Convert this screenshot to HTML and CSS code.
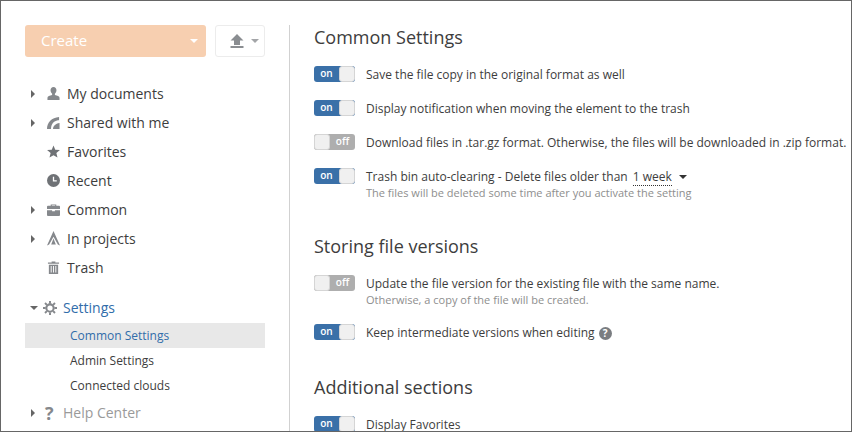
FILE: index.html
```html
<!DOCTYPE html>
<html lang="en">
<head>
  <meta charset="UTF-8" />
  <meta name="viewport" content="width=device-width, initial-scale=1.0"/>
  <title>Common Settings</title>
  <link rel="stylesheet" href="styles.css">
</head>
<body>
  <div class="window">
    <aside class="sidebar">
      <div class="actions">
        <button class="create">Create<span class="caret caret-white"></span></button>
        <button class="upload">
          <svg width="14" height="14" viewBox="0 0 14 14"><path d="M7 0l6.500 6.500H10V11H4V6.500H.5zM.5 12h13v2H.5z" fill="#8a8d91"/></svg>
          <span class="caret caret-grey"></span>
        </button>
      </div>

      <ul class="tree">
        <li class="tree-item"><span class="arrow"></span>
          <svg class="icon" width="13" height="13" viewBox="0 0 14 14"><path d="M7 0c2 0 3.200 1.500 3.200 3.500 0 1.600-.8 3-1.700 3.700v1.300c2.500.6 5 1.500 5 3V14H.5v-2.500c0-1.500 2.500-2.400 5-3V7.200C4.600 6.500 3.800 5.100 3.800 3.500 3.800 1.500 5 0 7 0z" fill="#85888c"/></svg>
          My documents</li>
        <li class="tree-item"><span class="arrow"></span>
          <svg class="icon" width="13" height="13" viewBox="0 0 14 14"><path d="M0 14C0 7 5 1.500 13 1v3.500c-.8 0-1.500.1-2.200.3C7 5.700 4.500 9 4.300 14zM6.500 14c0-3 2.500-6 7-6.500V14z" fill="#85888c"/></svg>
          Shared with me</li>
        <li class="tree-item"><span class="arrow arrow-none"></span>
          <svg class="icon" width="13" height="13" viewBox="0 0 14 14"><path d="M7 .5l1.900 4.600 5 .4-3.800 3.200 1.200 4.800L7 11l-4.300 2.500 1.200-4.800L.1 5.500l5-.4z" fill="#6f7276"/></svg>
          Favorites</li>
        <li class="tree-item"><span class="arrow arrow-none"></span>
          <svg class="icon" width="13" height="13" viewBox="0 0 14 14"><circle cx="7" cy="7" r="7" fill="#6f7276"/><path d="M7 3v4.500h3.500" fill="none" stroke="#fff" stroke-width="1.400"/></svg>
          Recent</li>
        <li class="tree-item"><span class="arrow"></span>
          <svg class="icon" width="13" height="13" viewBox="0 0 14 14"><path d="M4 3V1.500h6V3h3c.6 0 1 .4 1 1v2.500H0V4c0-.6.400-1 1-1zm1.200 0h3.600v-.5H5.200zM0 7.700h5.500v1.200h3V7.700H14V13c0 .6-.4 1-1 1H1c-.6 0-1-.4-1-1z" fill="#85888c"/></svg>
          Common</li>
        <li class="tree-item"><span class="arrow"></span>
          <svg class="icon" width="13" height="15" viewBox="0 0 14 16"><path d="M7 0l1.200 2.600L14 15.500l-2.300-1L7 6l-4.700 8.500-2.300 1L5.800 2.600zM7 8l2.500 6.500h-5z" fill="#85888c"/></svg>
          In projects</li>
        <li class="tree-item"><span class="arrow arrow-none"></span>
          <svg class="icon" width="13" height="13" viewBox="0 0 14 14"><path d="M5 .5h4v1h4v1.500H1V1.500h4zM2 4h10v10H2zM4 5.500v7h1v-7zm2.500 0v7h1v-7zm2.500 0v7h1v-7z" fill="#85888c" fill-rule="evenodd"/></svg>
          Trash</li>
      </ul>

      <div class="settings-head"><span class="arrow-down"></span>
        <svg class="gear" width="14" height="14" viewBox="0 0 16 16"><circle cx="8" cy="8" r="4.200" fill="none" stroke="#85888c" stroke-width="2.400"/><path d="M8 0v3M8 13v3M0 8h3M13 8h3M2.300 2.300l2.100 2.100M11.600 11.600l2.100 2.100M2.300 13.700l2.100-2.100M11.600 4.400l2.100-2.100" stroke="#85888c" stroke-width="2.200"/></svg>
        Settings</div>
      <ul class="subtree">
        <li class="sub-item selected">Common Settings</li>
        <li class="sub-item">Admin Settings</li>
        <li class="sub-item">Connected clouds</li>
      </ul>
      <div class="help-head"><span class="arrow"></span><span class="help-mark">?</span>Help Center</div>
    </aside>

    <main class="content">
      <h2 class="first">Common Settings</h2>
      <div class="setting">
        <span class="toggle on"><span class="label">on</span><span class="knob"></span></span>
        <div class="text">Save the file copy in the original format as well</div>
      </div>
      <div class="setting">
        <span class="toggle on"><span class="label">on</span><span class="knob"></span></span>
        <div class="text">Display notification when moving the element to the trash</div>
      </div>
      <div class="setting">
        <span class="toggle off"><span class="knob"></span><span class="label">off</span></span>
        <div class="text">Download files in .tar.gz format. Otherwise, the files will be downloaded in .zip format.</div>
      </div>
      <div class="setting">
        <span class="toggle on"><span class="label">on</span><span class="knob"></span></span>
        <div class="text">Trash bin auto-clearing - Delete files older than <span class="combo">1 week</span><span class="caret caret-dark"></span>
          <div class="hint">The files will be deleted some time after you activate the setting</div>
        </div>
      </div>

      <h2>Storing file versions</h2>
      <div class="setting">
        <span class="toggle off"><span class="knob"></span><span class="label">off</span></span>
        <div class="text">Update the file version for the existing file with the same name.
          <div class="hint">Otherwise, a copy of the file will be created.</div>
        </div>
      </div>
      <div class="setting">
        <span class="toggle on"><span class="label">on</span><span class="knob"></span></span>
        <div class="text">Keep intermediate versions when editing <span class="help-icon">?</span></div>
      </div>

      <h2>Additional sections</h2>
      <div class="setting">
        <span class="toggle on"><span class="label">on</span><span class="knob"></span></span>
        <div class="text">Display Favorites</div>
      </div>
    </main>
  </div>
</body>
</html>
```

FILE: styles.css
```css
* {
  box-sizing: border-box;
}
html, body {
  margin: 0;
  height: 432px;
  overflow: hidden;
}
body {
  font-family: "Open Sans", sans-serif;
  background-color: #fff;
  color: #3d3d3d;
}
.window {
  display: flex;
  height: 432px;
  border: 1px solid #666;
  overflow: hidden;
}
.sidebar {
  flex: none;
  width: 289px;
  height: 430px;
  margin-top: 24px;
  padding: 0 24px;
  border-right: 1px solid #d1d1d1;
}
.actions {
  display: flex;
  gap: 9px;
  width: 240px;
}
button {
  font-family: inherit;
  border-radius: 3px;
  padding: 0;
}
.create {
  position: relative;
  width: 181px;
  height: 32px;
  border: none;
  background-color: #f7cfb0;
  color: #fff;
  font-size: 15px;
  text-align: left;
  padding: 0 0 2px 16px;
}
.create .caret {
  position: absolute;
  right: 8px;
  top: 14px;
}
.upload {
  display: flex;
  align-items: center;
  justify-content: center;
  gap: 7px;
  width: 50px;
  height: 32px;
  padding-left: 8px;
  border: 1px solid #ececec;
  background-color: #fff;
}
.caret {
  display: inline-block;
  width: 0;
  height: 0;
  border-left: 4px solid transparent;
  border-right: 4px solid transparent;
  border-top: 4px solid #fff;
}
.caret-grey {
  border-top-color: #a3a5a8;
}
.caret-dark {
  border-top-color: #333;
  margin-left: 7px;
  vertical-align: 2px;
}
.tree, .subtree {
  list-style: none;
  margin: 0;
  padding: 0;
}
.tree {
  margin-top: 22px;
}
.tree-item {
  display: flex;
  align-items: center;
  height: 29px;
  font-size: 14px;
  padding-left: 6px;
}
.arrow {
  flex: none;
  width: 0;
  height: 0;
  border-top: 4px solid transparent;
  border-bottom: 4px solid transparent;
  border-left: 4px solid #666;
  margin-right: 12px;
}
.arrow-none {
  border-left-color: transparent;
}
.icon {
  flex: none;
  margin-right: 7px;
}
.settings-head {
  display: flex;
  align-items: center;
  margin-top: 11px;
  height: 29px;
  font-size: 14px;
  color: #316daa;
  padding-left: 5px;
}
.arrow-down {
  width: 0;
  height: 0;
  border-left: 4px solid transparent;
  border-right: 4px solid transparent;
  border-top: 4px solid #666;
  margin-right: 5px;
}
.gear {
  margin-right: 6px;
}
.subtree {
  margin-top: 1px;
}
.sub-item {
  height: 25px;
  line-height: 25px;
  padding-left: 45px;
  font-size: 12px;
}
.selected {
  background-color: #e8e8e8;
  color: #316daa;
}
.help-head {
  display: flex;
  align-items: center;
  height: 29px;
  font-size: 14px;
  color: #9a9a9a;
  padding-left: 6px;
}
.help-head .arrow {
  margin-right: 10px;
}
.help-mark {
  width: 18px;
  font-weight: 700;
  font-size: 18px;
  color: #85888c;
}
.content {
  flex: 1;
  padding: 0 0 0 24px;
  margin-top: 24px;
  min-width: 0;
}
h2 {
  margin: 33px 0 17px;
  font-size: 18px;
  font-weight: 400;
  line-height: 24px;
}
h2.first {
  margin-top: 0;
}
.setting {
  display: flex;
  margin-bottom: 16px;
  font-size: 12px;
  line-height: 18px;
}
.toggle {
  flex: none;
  display: flex;
  width: 41px;
  height: 16px;
  border-radius: 3px;
  overflow: hidden;
  margin-right: 11px;
  font-size: 10px;
  font-weight: 600;
  line-height: 15px;
  color: #fff;
  text-align: center;
}
.toggle .label {
  width: 25px;
}
.toggle .knob {
  width: 16px;
  background-color: #f0f0f0;
  border: 1px solid #d5d5d5;
}
.toggle.on {
  background-color: #3a70a8;
}
.toggle.on .knob {
  border-radius: 3px;
}
.toggle.off {
  background-color: #aeaeae;
}
.toggle.off .knob {
  border-radius: 3px;
}
.text {
  white-space: nowrap;
}
.hint {
  margin: -1px 0 1px;
  font-size: 11px;
  line-height: 15px;
  color: #8e8e8e;
}
.combo {
  border-bottom: 1px dotted #333;
  margin-left: 2px;
}
.help-icon {
  display: inline-block;
  width: 13px;
  height: 13px;
  border-radius: 50%;
  background-color: #7a7d81;
  color: #fff;
  font-size: 10px;
  font-weight: 700;
  line-height: 13px;
  text-align: center;
  margin-left: 1px;
}
```
